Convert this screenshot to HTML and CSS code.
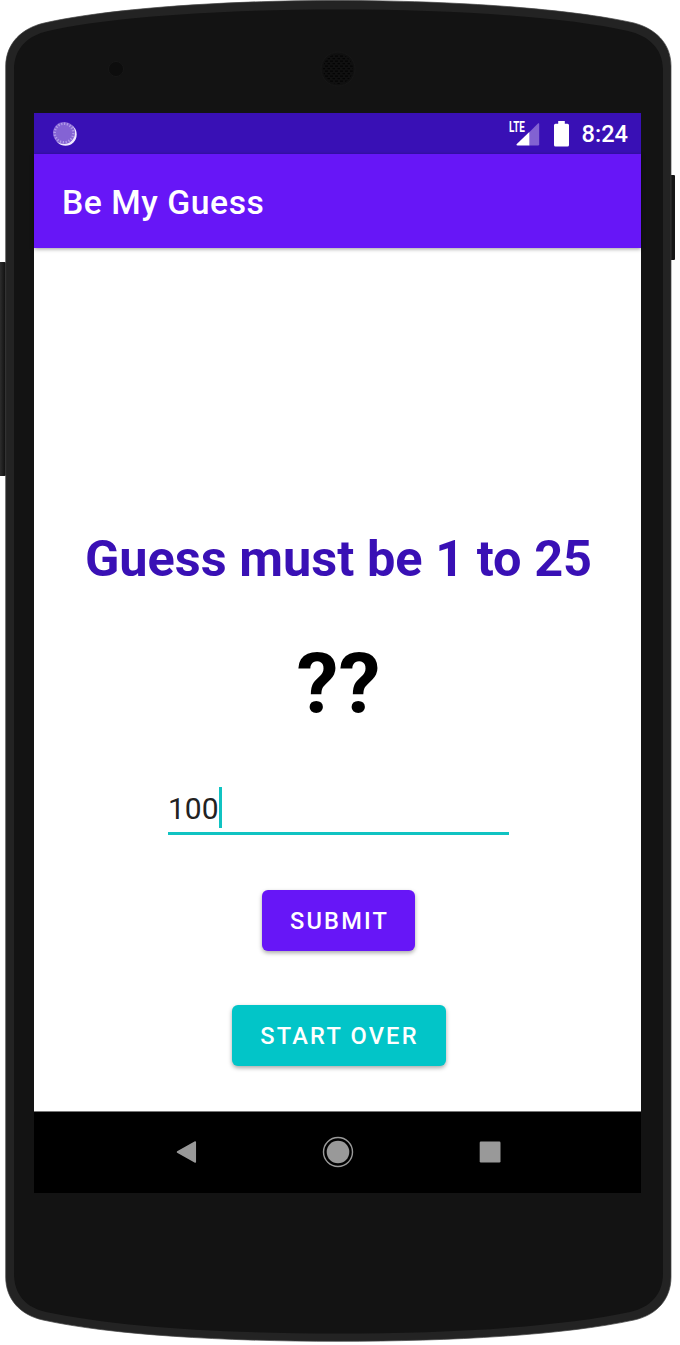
FILE: index.html
```html
<!DOCTYPE html>
<html lang="en">
<head>
<meta charset="utf-8">
<title>Be My Guess</title>
<link rel="stylesheet" href="styles.css">
</head>
<body>
<div class="device">
  <svg class="device-frame" viewBox="0 0 680 1345" aria-hidden="true">
    <defs>
      <linearGradient id="volume"><stop offset="0" stop-color="#111"/><stop offset=".35" stop-color="#2b2b2b"/><stop offset=".8" stop-color="#141414"/><stop offset="1" stop-color="#222"/></linearGradient>
      <pattern id="mesh" width="5" height="5" patternUnits="userSpaceOnUse"><path d="M0 1.2h3M2.500 3.700h3" stroke="#040404" stroke-width="1.200"/></pattern>
    </defs>
    <rect x="-3" y="262" width="9.500" height="214" rx="2" fill="url(#volume)"/>
    <rect x="668" y="175" width="7" height="85" rx="1" fill="#161616"/>
    <path fill="#232323" stroke="#444" stroke-width=".7" d="M5.700 66C6 43 22 28.500 43 23.300C105 9 220 .5 338 .5S572 9 634 23C655 28.500 671 43 671 66V1277C671 1299 657 1315 634 1320C565 1335 452 1341.300 338 1341.300S111 1335 43 1320C20 1315 5.700 1299 5.700 1277Z"/>
    <path fill="#131313" d="M14 70C14 48 28 35.500 48 31C112 16.500 225 9.500 338 9.500S564 16.500 628 31C648 35.500 663 48 663 70V1273C663 1295 650 1307.500 630 1312C560 1327 450 1333.500 338 1333.500S116 1327 46 1312C26 1307.500 14 1295 14 1273Z"/>
    <circle cx="116" cy="69" r="7.500" fill="#0d0d0d" stroke="#171717"/>
    <circle cx="338" cy="69" r="17" fill="#101010" stroke="#171717"/>
    <circle cx="338" cy="69" r="15" fill="url(#mesh)"/>
  </svg>
  <div class="screen">
    <div class="status-bar">
      <svg class="sync-icon" viewBox="0 0 24 24"><circle cx="12.500" cy="12.500" r="11.200" fill="#f0e9ff"/><circle cx="11" cy="11" r="11" fill="#8463d4"/><circle cx="11" cy="11" r="9.300" fill="none" stroke="#b09ae8" stroke-width="2.400" stroke-dasharray="1.300 1.600"/></svg>
      <div class="signal">
        <span class="lte">LTE</span>
        <svg class="signal-icon" viewBox="0 0 24 24"><path fill="#8262d2" d="M13 10.500L22.200 1.300Q23.200.8 23.200 2V22.200Q23.200 23.500 22 23.500H13Z"/><path fill="#fff" d="M13.300 10V23.500H1.500Q-.2 23.300.8 22Z"/></svg>
      </div>
      <svg class="battery-icon" viewBox="0 0 15 26"><path fill="#fff" d="M4.200 0H10.800V2.800H13.500Q15 2.800 15 4.300V24Q15 25.500 13.500 25.500H1.500Q0 25.500 0 24V4.300Q0 2.800 1.500 2.800H4.200Z"/></svg>
      <span class="clock">8:24</span>
    </div>
    <header class="app-bar"><h1 class="app-title">Be My Guess</h1></header>
    <main class="content">
      <p class="message">Guess must be 1 to 25</p>
      <p class="secret">??</p>
      <div class="field"><span class="field-value">100</span><span class="caret"></span></div>
      <button class="button submit">SUBMIT</button>
      <button class="button restart">START OVER</button>
    </main>
    <nav class="nav-bar">
      <svg class="nav-icon" viewBox="0 0 32 32"><path fill="#999" stroke="#999" stroke-width="1.500" stroke-linejoin="round" d="M7.500 16L25.300 6V26Z"/></svg>
      <svg class="nav-icon" viewBox="0 0 32 32"><circle cx="16" cy="16" r="14.500" fill="none" stroke="#999" stroke-width="1.400"/><circle cx="16" cy="16" r="11.300" fill="#999"/></svg>
      <svg class="nav-icon" viewBox="0 0 32 32"><rect x="5.700" y="5.600" width="20.800" height="20.800" rx="1.200" fill="#999"/></svg>
    </nav>
  </div>
</div>
</body>
</html>
```
FILE: styles.css
```css
* { box-sizing: border-box; }

body {
  margin: 0;
  background: #fff;
  font-family: Roboto, "Liberation Sans", sans-serif;
}

h1, p { margin: 0; }

.device {
  position: relative;
  width: 680px;
  height: 1345px;
  padding: 113px 39px 152px 34px;
  overflow: hidden;
}

.device-frame {
  position: absolute;
  inset: 0;
  width: 680px;
  height: 1345px;
}

.screen {
  position: relative;
  display: flex;
  flex-direction: column;
  width: 607px;
  height: 1080px;
  background: #fff;
}

.status-bar {
  display: flex;
  align-items: center;
  height: 41px;
  padding: 0 13px 0 19px;
  background: #3910b5;
  color: #fff;
}

.sync-icon { width: 24px; height: 24px; }

.signal {
  position: relative;
  width: 30px;
  height: 24px;
  margin-left: auto;
  padding-left: 6px;
}

.signal-icon { display: block; width: 24px; height: 24px; }

.lte {
  position: absolute;
  left: -1px;
  top: -2px;
  font-size: 14.5px;
  font-weight: 700;
  line-height: 15px;
  transform: scaleX(0.68);
  transform-origin: left;
}

.battery-icon { width: 15px; height: 26px; margin: 0 13px 0 14px; }

.clock {
  font-size: 23.6px;
  font-weight: 500;
  line-height: 41px;
  padding-top: 2px;
}

.app-bar {
  display: flex;
  align-items: center;
  height: 94px;
  padding: 3px 28px 0;
  background: #6716f7;
  box-shadow: 0 1px 4px rgba(0, 0, 0, 0.4);
}

.app-title {
  color: #fff;
  font-size: 33.7px;
  font-weight: 500;
  letter-spacing: 0.55px;
  white-space: nowrap;
}

.content {
  display: flex;
  flex: 1;
  flex-direction: column;
  align-items: center;
  padding: 281px 0 0 2px;
}

.message {
  color: #3910b5;
  font-size: 50.5px;
  font-weight: 700;
  line-height: 60px;
  white-space: nowrap;
}

.secret {
  margin-top: 46px;
  color: #000;
  font-size: 84.3px;
  font-weight: 700;
  line-height: 100px;
}

.field {
  display: flex;
  align-items: flex-start;
  width: 341px;
  height: 48px;
  margin-top: 52px;
  border-bottom: 3px solid #10c3c2;
}

.field-value {
  color: #222;
  font-size: 30px;
  line-height: 43px;
}

.caret { width: 3px; height: 41px; background: #10c3c2; }

.button {
  height: 61px;
  padding: 1px 26px 0 28px;
  border: 0;
  border-radius: 6px;
  color: #fff;
  font-family: inherit;
  font-size: 23.6px;
  font-weight: 500;
  letter-spacing: 2.2px;
  white-space: nowrap;
  box-shadow: 0 2px 4px rgba(0, 0, 0, 0.34);
}

.submit { width: 153px; margin-top: 55px; background: #6716f7; }

.restart { width: 214px; margin-top: 54px; background: #02c5c8; }

.nav-bar {
  display: flex;
  align-items: center;
  justify-content: center;
  gap: 120px;
  height: 82px;
  padding: 0 0 2px 1px;
  border-top: 1px solid #777;
  background: #000;
}

.nav-icon { width: 32px; height: 32px; }
```
